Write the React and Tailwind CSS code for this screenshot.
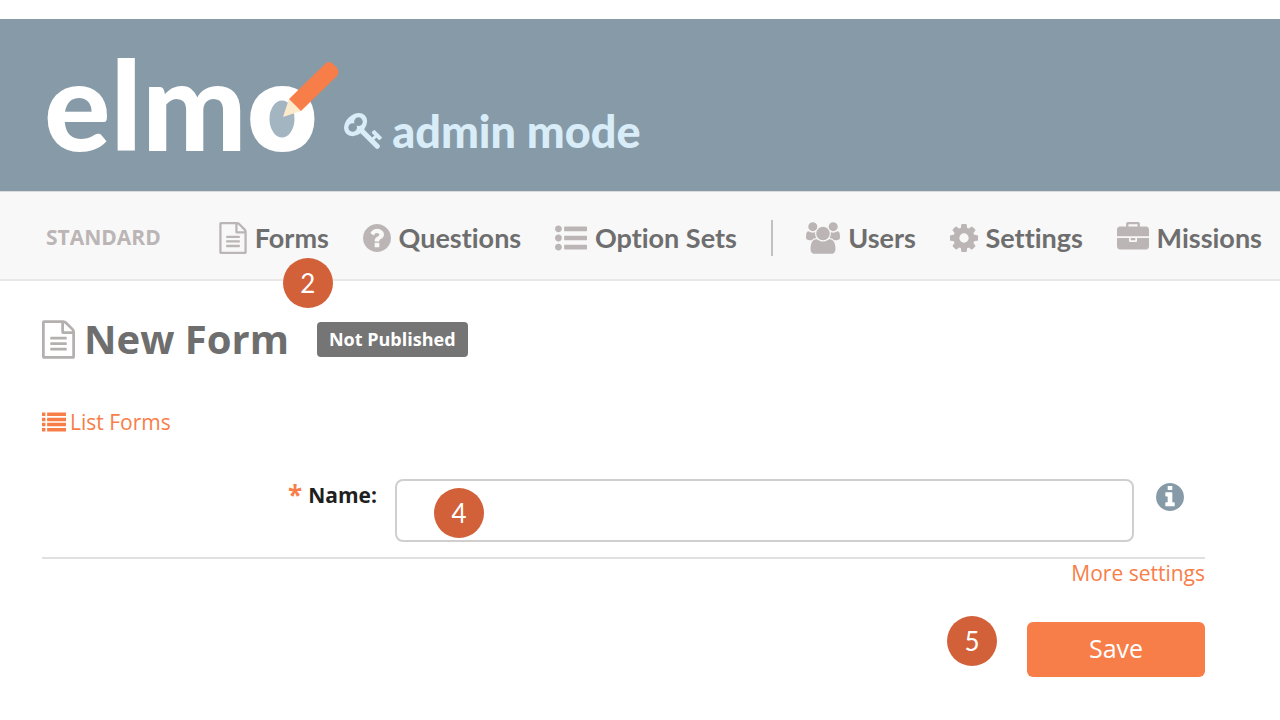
import React from "react";

const PATHS = {
  file: "M1596 380q28 28 48 76t20 88v1152q0 40-28 68t-68 28h-1344q-40 0-68-28t-28-68v-1600q0-40 28-68t68-28h896q40 0 88 20t76 48zm-444-244v376h376q-10-29-22-41l-313-313q-12-12-41-22zm384 1528v-1024h-416q-40 0-68-28t-28-68v-416h-768v1536h1280zm-1024-864q0-14 9-23t23-9h704q14 0 23 9t9 23v64q0 14-9 23t-23 9h-704q-14 0-23-9t-9-23v-64zm736 224q14 0 23 9t9 23v64q0 14-9 23t-23 9h-704q-14 0-23-9t-9-23v-64q0-14 9-23t23-9h704zm0 256q14 0 23 9t9 23v64q0 14-9 23t-23 9h-704q-14 0-23-9t-9-23v-64q0-14 9-23t23-9h704z",
  question:
    "M1024 1376v-192q0-14-9-23t-23-9h-192q-14 0-23 9t-9 23v192q0 14 9 23t23 9h192q14 0 23-9t9-23zm256-672q0-88-55.5-163t-138.5-116-170-41q-243 0-371 213-15 24 8 42l132 100q7 6 19 6 16 0 25-12 53-68 86-92 34-24 86-24 48 0 85.5 26t37.5 59q0 38-20 61t-68 45q-63 28-115.5 86.5t-52.5 125.5v36q0 14 9 23t23 9h192q14 0 23-9t9-23q0-19 21.5-49.5t54.5-49.5q32-18 49-28.5t46-35 44.5-48 28-60.5 12.5-81zm384 192q0 209-103 385.5t-279.5 279.5-385.5 103-385.5-103-279.5-279.5-103-385.5 103-385.5 279.5-279.5 385.5-103 385.5 103 279.5 279.5 103 385.5z",
  info: "M1152 1376v-160q0-14-9-23t-23-9h-96v-512q0-14-9-23t-23-9h-320q-14 0-23 9t-9 23v160q0 14 9 23t23 9h96v320h-96q-14 0-23 9t-9 23v160q0 14 9 23t23 9h448q14 0 23-9t9-23zm-128-896v-160q0-14-9-23t-23-9h-192q-14 0-23 9t-9 23v160q0 14 9 23t23 9h192q14 0 23-9t9-23zm640 416q0 209-103 385.5t-279.5 279.5-385.5 103-385.5-103-279.5-279.5-103-385.5 103-385.5 279.5-279.5 385.5-103 385.5 103 279.5 279.5 103 385.5z",
  cog: "M1152 896q0-106-75-181t-181-75-181 75-75 181 75 181 181 75 181-75 75-181zm512-109v222q0 12-8 23t-20 13l-185 28q-19 54-39 91 35 50 107 138 10 12 10 25t-9 23q-27 37-99 108t-94 71q-12 0-26-9l-138-108q-44 23-91 38-16 136-29 186-7 28-36 28h-222q-14 0-24.5-8.5t-11.5-21.5l-28-184q-49-16-90-37l-141 107q-10 9-25 9-14 0-25-11-126-114-165-168-7-10-7-23 0-12 8-23 15-21 51-66.5t54-70.5q-27-50-41-99l-183-27q-13-2-21-12.5t-8-23.5v-222q0-12 8-23t19-13l186-28q14-46 39-92-40-57-107-138-10-12-10-24 0-10 9-23 26-36 98.5-107.5t94.5-71.5q13 0 26 10l138 107q44-23 91-38 16-136 29-186 7-28 36-28h222q14 0 24.5 8.5t11.5 21.5l28 184q49 16 90 37l142-107q9-9 24-9 13 0 25 10 129 119 165 170 7 8 7 22 0 12-8 23-15 21-51 66.5t-54 70.5q26 50 41 98l183 28q13 2 21 12.5t8 23.5z",
  users:
    "M529 896q-162 5-265 128h-134q-82 0-138-40.5t-56-118.5q0-353 124-353 6 0 43.5 21t97.5 42.5 119 21.5q67 0 133-23-5 37-5 66 0 139 81 256zm1071 637q0 120-73 189.5t-194 69.5h-874q-121 0-194-69.5t-73-189.5q0-53 3.5-103.5t14-109 26.5-108.5 43-97.5 62-81 85.5-53.5 111.5-20q10 0 43 21.5t73 48 107 48 135 21.5 135-21.5 107-48 73-48 43-21.5q61 0 111.5 20t85.5 53.5 62 81 43 97.5 26.5 108.5 14 109 3.5 103.5zm-1024-1277q0 106-75 181t-181 75-181-75-75-181 75-181 181-75 181 75 75 181zm704 384q0 159-112.5 271.5t-271.5 112.5-271.5-112.5-112.5-271.5 112.5-271.5 271.5-112.5 271.5 112.5 112.5 271.5zm576 225q0 78-56 118.5t-138 40.5h-134q-103-123-265-128 81-117 81-256 0-29-5-66 66 23 133 23 59 0 119-21.5t97.5-42.5 43.5-21q124 0 124 353zm-128-609q0 106-75 181t-181 75-181-75-75-181 75-181 181-75 181 75 75 181z",
  briefcase:
    "M640 256h512v-128h-512v128zm1152 640v480q0 66-47 113t-113 47h-1472q-66 0-113-47t-47-113v-480h672v160q0 26 19 45t45 19h320q26 0 45-19t19-45v-160h672zm-768 0v128h-256v-128h256zm768-480v384h-1792v-384q0-66 47-113t113-47h352v-160q0-40 28-68t68-28h576q40 0 68 28t28 68v160h352q66 0 113 47t47 113z",
  key: "M832 512q0-80-56-136t-136-56-136 56-56 136q0 42 19 83-41-19-83-19-80 0-136 56t-56 136 56 136 136 56 136-56 56-136q0-42-19-83 41 19 83 19 80 0 136-56t56-136zm851 704q0 17-49 66t-66 49q-9 0-28.5-16t-36.5-33-38.5-40-24.5-26l-96 96 220 220q28 28 28 68 0 42-39 81t-81 39q-40 0-68-28l-671-671q-176 131-365 131-163 0-265.5-102.5t-102.5-265.5q0-160 95-313t248-248 313-95q163 0 265.5 102.5t102.5 265.5q0 189-131 365l355 355 96-96q-3-3-26-24.5t-40-38.5-33-36.5-16-28.5q0-17 49-66t66-49q13 0 23 10 6 6 46 44.5t82 79.5 86.5 86 73 78 28.5 41z",
  listUl:
    "M384 1408q0 80-56 136t-136 56-136-56-56-136 56-136 136-56 136 56 56 136zm0-512q0 80-56 136t-136 56-136-56-56-136 56-136 136-56 136 56 56 136zm1408 416v192q0 13-9.500 22.500t-22.500 9.500h-1216q-13 0-22.500-9.500t-9.500-22.500v-192q0-13 9.500-22.500t22.500-9.500h1216q13 0 22.500 9.500t9.500 22.500zm-1408-928q0 80-56 136t-136 56-136-56-56-136 56-136 136-56 136 56 56 136zm1408 416v192q0 13-9.500 22.500t-22.500 9.500h-1216q-13 0-22.500-9.500t-9.500-22.500v-192q0-13 9.500-22.500t22.500-9.500h1216q13 0 22.500 9.500t9.500 22.500zm0-512v192q0 13-9.500 22.500t-22.500 9.500h-1216q-13 0-22.500-9.500t-9.500-22.500v-192q0-13 9.500-22.500t22.500-9.500h1216q13 0 22.500 9.500t9.500 22.500z",
  list: "M0 192h256v256h-256zM384 192h1408v256h-1408zM0 576h256v256h-256zM384 576h1408v256h-1408zM0 960h256v256h-256zM384 960h1408v256h-1408zM0 1344h256v256h-256zM384 1344h1408v256h-1408z",
};

function Icon({ name, box, className }) {
  return (
    <svg viewBox={box} fill="currentColor" aria-hidden="true" className={"shrink-0 " + className}>
      <path d={PATHS[name]} />
    </svg>
  );
}

function NavItem({ icon, box, size, children, step }) {
  return (
    <a href="#" className="relative flex items-center gap-2 text-[#6e6e6e]">
      <Icon name={icon} box={box} className={size + " text-[#bbb5b5]"} />
      <span className="font-bold">{children}</span>
      {step && <Step className="absolute top-9 -right-1">{step}</Step>}
    </a>
  );
}

function Step({ children, className = "" }) {
  return (
    <span
      className={
        "flex size-[50px] items-center justify-center rounded-full bg-[#d26039] font-[Lato,sans-serif] text-[26px] leading-8 font-normal text-white " +
        className
      }
    >
      {children}
    </span>
  );
}

function Logo() {
  return (
    <div className="relative font-[Lato,sans-serif] text-[124px] leading-[124px] font-black text-white">
      elmo
      <svg viewBox="0 0 100 95" aria-hidden="true" className="absolute top-[15px] right-[-21px] h-[95px] w-[100px]">
        <ellipse cx="43" cy="63" rx="15" ry="21" fill="#a3b5c1" stroke="#ffffff" strokeWidth="5" />
        <path d="M44 61L50 43L62 55Z" fill="#fdeacb" />
        <path d="M50 43L86 8Q90 4 94 8L98 12Q101 16 98 20L62 55Z" fill="#f77e49" />
      </svg>
    </div>
  );
}

export default function App() {
  return (
    <div className="min-h-screen bg-white pt-[19px] font-['Open_Sans',sans-serif]">
      <header className="flex h-[172px] items-end bg-[#869aa8] px-11 pb-[26px]">
        <Logo />
        <div className="ml-[26px] flex items-center gap-[10px] pb-2 text-[#d9edf9]">
          <Icon name="key" box="0 82 1684 1684" className="size-[38px]" />
          <span className="font-[Lato,sans-serif] text-[45px] leading-[52px] font-black">admin mode</span>
        </div>
      </header>

      <nav className="flex h-[90px] items-center border-t border-b-2 border-t-[#d8dcdf] border-b-[#e8e8e8] bg-[#f8f8f8] pt-1 pr-[18px] pl-[46px]">
        <span className="mr-[58px] text-[21px] font-bold text-[#bbb5b5]">STANDARD</span>
        <div className="flex flex-1 items-center justify-between font-[Lato,sans-serif] text-[27px] leading-8 [font-variant-ligatures:none]">
          <NavItem icon="file" box="128 0 1536 1792" size="h-8 w-7" step="2">Forms</NavItem>
          <NavItem icon="question" box="128 128 1536 1536" size="size-7">Questions</NavItem>
          <NavItem icon="listUl" box="0 0 1792 1792" size="size-8">Option Sets</NavItem>
          <span className="h-9 w-[2px] bg-[#c4c0c0]" />
          <NavItem icon="users" box="-64 0 1920 1792" size="h-8 w-[34px]">Users</NavItem>
          <NavItem icon="cog" box="128 128 1536 1536" size="size-7">Settings</NavItem>
          <NavItem icon="briefcase" box="0 0 1792 1792" size="size-8">Missions</NavItem>
        </div>
      </nav>

      <main className="pt-8 pr-[75px] pl-[42px]">
        <div className="flex items-center">
          <Icon name="file" box="128 0 1536 1792" className="h-[39px] w-[33px] text-[#b5b0b0]" />
          <h1 className="ml-[9px] text-[40px] leading-[52px] font-bold text-[#6e6e6e]">New Form</h1>
          <span className="ml-7 rounded bg-[#757575] px-3 text-[18px] leading-[35px] font-bold text-white">
            Not Published
          </span>
        </div>

        <a href="#" className="mt-[41px] flex w-fit items-center gap-1 text-[21px] leading-8 text-[#f77e49]">
          <Icon name="list" box="0 0 1792 1792" className="size-6" />
          List Forms
        </a>

        <form onSubmit={(e) => e.preventDefault()}>
          <div className="mt-[41px] flex items-start border-b-2 border-[#e0e0e0] pb-[15px]">
            <label htmlFor="name" className="flex w-[353px] justify-end gap-[6px] pr-[18px] text-[21px] leading-8 font-bold text-[#1f1f1f]">
              <span className="text-[26px] text-[#f77e49]">*</span>
              Name:
            </label>
            <div className="relative flex-1">
              <input
                id="name"
                type="text"
                className="block h-[63px] w-full rounded-lg border-2 border-[#cfcfcf] bg-white px-4 text-[21px] outline-none"
              />
              <Step className="absolute top-[9px] left-[39px]">4</Step>
            </div>
            <button type="button" aria-label="About the name field" className="mt-1 mr-[21px] ml-[22px] text-[#869aa8]">
              <Icon name="info" box="128 128 1536 1536" className="block size-7" />
            </button>
          </div>

          <div className="flex justify-end">
            <a href="#" className="text-[21px] leading-7 text-[#f77e49]">More settings</a>
          </div>

          <div className="mt-[29px] flex items-start justify-end gap-[30px]">
            <Step>5</Step>
            <button type="submit" className="mt-[6px] h-[55px] w-[178px] rounded-md bg-[#f77e49] pb-1 text-[25px] leading-8 text-white">
              Save
            </button>
          </div>
        </form>
      </main>
    </div>
  );
}
